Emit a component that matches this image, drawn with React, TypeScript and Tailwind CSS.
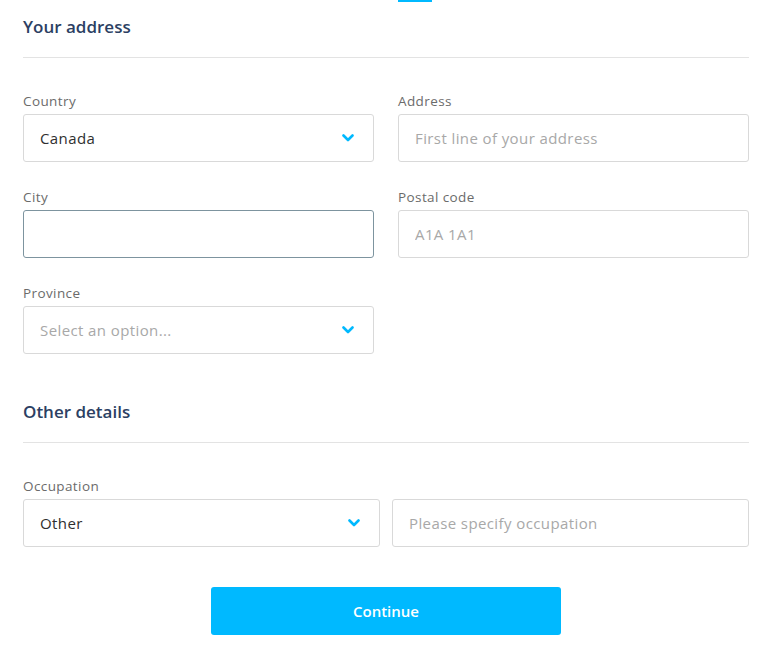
import { useState } from 'react';

function Chevron() {
  return (
    <svg width="12" height="8" viewBox="0 0 12 8" className="absolute right-[19px] top-1/2 -translate-y-1/2">
      <path d="M1.5 1.5 L6 6 L10.5 1.5" fill="none" stroke="#00b9ff" strokeWidth="2.6" strokeLinecap="round" strokeLinejoin="round" />
    </svg>
  );
}

function Label({ children }: { children: React.ReactNode }) {
  return <label className="block text-[13.5px] tracking-[0.4px] leading-[18px] text-[#6b6b6b] mb-1">{children}</label>;
}

function SelectBox({ value, placeholder }: { value?: string; placeholder?: string }) {
  return (
    <div className="relative h-12 border border-[#d9d9d9] rounded-[3px] bg-white flex items-center px-4 tracking-[0.4px]">
      {value ? (
        <span className="text-[15px] text-[#2f2f2f]">{value}</span>
      ) : (
        <span className="text-[15px] text-[#a8a8a8]">{placeholder}</span>
      )}
      <Chevron />
    </div>
  );
}

function TextBox({ placeholder, focused }: { placeholder?: string; focused?: boolean }) {
  const [v, setV] = useState('');
  return (
    <input
      value={v}
      onChange={(e) => setV(e.target.value)}
      placeholder={placeholder}
      className={`w-full h-12 rounded-[3px] bg-white px-4 text-[15px] tracking-[0.4px] text-[#2f2f2f] placeholder:text-[#a8a8a8] outline-none ${
        focused ? 'border border-[#7d949f]' : 'border border-[#d9d9d9]'
      }`}
    />
  );
}

function SectionTitle({ children }: { children: React.ReactNode }) {
  return (
    <div className="border-b border-[#e3e3e3] pb-5">
      <h2 className="text-[17px] leading-5 font-semibold text-[#2c3f63]">{children}</h2>
    </div>
  );
}

export default function App() {
  return (
    <div className="w-[777px] h-[654px] bg-white overflow-hidden" style={{ fontFamily: '"Open Sans", Lato, sans-serif' }}>
      {/* clipped link underline from previous block */}
      <div className="ml-[398px] w-[34px] h-[2px] bg-[#00b9ff]" />
      <div className="ml-[23px] w-[726px]">
        <div className="pt-[15px]">
          <SectionTitle>Your address</SectionTitle>
        </div>

        <div className="grid grid-cols-2 gap-x-6 gap-y-[26px] mt-[34px]">
          <div>
            <Label>Country</Label>
            <SelectBox value="Canada" />
          </div>
          <div>
            <Label>Address</Label>
            <TextBox placeholder="First line of your address" />
          </div>
          <div>
            <Label>City</Label>
            <TextBox focused />
          </div>
          <div>
            <Label>Postal code</Label>
            <TextBox placeholder="A1A 1A1" />
          </div>
          <div>
            <Label>Province</Label>
            <SelectBox placeholder="Select an option..." />
          </div>
        </div>

        <div className="mt-12">
          <SectionTitle>Other details</SectionTitle>
        </div>

        <div className="mt-[34px]">
          <Label>Occupation</Label>
          <div className="grid grid-cols-2 gap-x-3">
            <SelectBox value="Other" />
            <TextBox placeholder="Please specify occupation" />
          </div>
        </div>

        <div className="flex justify-center mt-10">
          <button className="w-[350px] h-12 rounded-[3px] bg-[#00b9ff] text-white text-[15px] font-semibold">
            Continue
          </button>
        </div>
      </div>
    </div>
  );
}
